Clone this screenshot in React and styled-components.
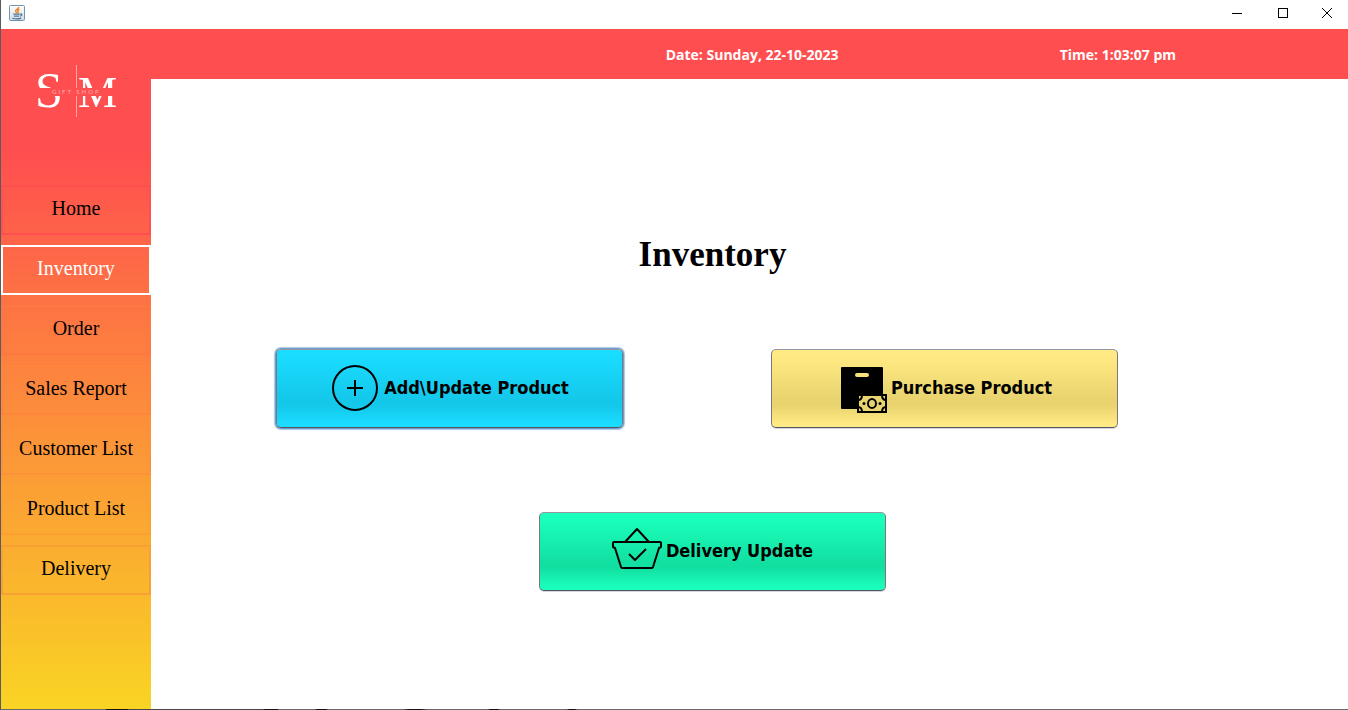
import React from "react";
import styled, { createGlobalStyle } from "styled-components";

const GlobalStyle = createGlobalStyle`
  * { box-sizing: border-box; }
  body { margin: 0; background: #fff; }
`;

const Window = styled.div`
  min-height: 100vh;
  display: flex;
  flex-direction: column;
  border-left: 1px solid #5c5a5c;
  background: #fff;
`;

const TitleBar = styled.header`
  height: 29px;
  display: flex;
  justify-content: space-between;
  padding-left: 8px;
`;

const AppIcon = styled.svg`
  width: 16px;
  height: 16px;
  margin-top: 5px;
`;

const WindowControls = styled.div`
  display: flex;
`;

const ControlButton = styled.button`
  width: 46px;
  height: 26px;
  padding: 0;
  border: 0;
  background: transparent;
  display: flex;
  align-items: center;
  justify-content: center;

  &:last-child {
    width: 42px;
  }
`;

const Body = styled.div`
  flex: 1;
  display: flex;
`;

const Sidebar = styled.aside`
  flex: 0 0 150px;
  background: linear-gradient(to bottom, #ff4e50 120px, #f9d423 100%);
`;

const Logo = styled.svg`
  display: block;
  width: 150px;
  height: 156px;
`;

const Nav = styled.nav`
  display: flex;
  flex-direction: column;
  gap: 10px;
`;

const NavButton = styled.button`
  height: 50px;
  padding: 0 0 4px;
  border: 2px solid ${(p) => p.$edge};
  background: transparent;
  color: ${(p) => (p.$active ? "#fff" : "#000")};
  font: 20px/24px "Liberation Serif", "Times New Roman", serif;
`;

const Content = styled.div`
  flex: 1;
  display: flex;
  flex-direction: column;
`;

const StatusBar = styled.div`
  height: 50px;
  padding-top: 2px;
  display: grid;
  grid-template-columns: 395fr 289fr;
  padding-left: 43%;
  align-items: center;
  background: #ff4e50;
  color: #fff;
  font: bold 14px/20px "Open Sans", "Segoe UI", sans-serif;
  white-space: nowrap;
`;

const Main = styled.main`
  flex: 1;
  display: grid;
  grid-template-columns: 124fr 843fr 230fr;
  align-content: start;
  padding-top: 152px;
`;

const Panel = styled.div`
  grid-column: 2;
  display: flex;
  flex-direction: column;
`;

const Centered = styled.div`
  display: flex;
  justify-content: center;
  padding-left: 32px;
`;

const Heading = styled.h1`
  margin: 0;
  font: bold 35px/48px "Liberation Serif", "Times New Roman", serif;
`;

const ActionRow = styled.div`
  display: flex;
  justify-content: space-between;
  gap: 24px;
  padding-left: 1px;
  margin: 70px 0 84px;
`;

const ActionButton = styled.button`
  width: 347px;
  height: 79px;
  padding: 0 0 1px;
  display: flex;
  align-items: center;
  justify-content: center;
  gap: 4px;
  border: 1px solid;
  border-color: #97979b #77777d #55555f #77777d;
  border-radius: 5px;
  background: linear-gradient(
    to bottom,
    ${(p) => p.$light} 0%,
    ${(p) => p.$light} 8%,
    ${(p) => p.$dark} 64%,
    ${(p) => p.$dark} 72%,
    ${(p) => p.$light} 96%
  );
  box-shadow: ${(p) =>
    p.$focused
      ? "0 0 0 1px #739cce, 0 0 1px 2px #a9c9e6"
      : "0 1px 0 #d5d7dc"};
  color: #000;
  font: bold 18px/24px "DejaVu Sans Condensed", Tahoma, sans-serif;
  white-space: nowrap;
`;

const ActionIcon = styled.svg`
  width: 50px;
  height: 50px;
  flex: none;
`;

const BottomEdge = styled.footer`
  height: 1px;
  background: linear-gradient(
    to right,
    #6a686a 104px, #161016 106px, #161016 126px, #49474a 128px,
    #49474a 262px, #161016 264px, #161016 276px, #6a686a 278px,
    #6a686a 314px, #161016 316px, #161016 325px, #6a686a 327px,
    #6a686a 402px, #161016 408px, #161016 420px, #6a686a 426px,
    #6a686a 487px, #161016 489px, #161016 497px, #6a686a 499px,
    #6a686a 566px, #161016 568px, #161016 574px, #6a686a 576px
  );
`;

const navItems = [
  { label: "Home", edge: "#ff4f50" },
  { label: "Inventory", edge: "#ffffff", active: true },
  { label: "Order", edge: "#ff7741" },
  { label: "Sales Report", edge: "#ff843c" },
  { label: "Customer List", edge: "#fd9038" },
  { label: "Product List", edge: "#fd9f32" },
  { label: "Delivery", edge: "#f7a033" },
];

function JavaIcon() {
  return (
    <AppIcon viewBox="0 0 16 16" aria-hidden="true">
      <defs>
        <linearGradient id="tile" x1="0" y1="0" x2="0" y2="1">
          <stop offset="0" stopColor="#fff" />
          <stop offset="1" stopColor="#cfdbe5" />
        </linearGradient>
      </defs>
      <rect x=".5" y=".5" width="15" height="15" rx="1" fill="url(#tile)" stroke="#7892a8" />
      <path d="M9.7 1.8C10.2 4 6.2 4.4 6.6 6.2c.2.8 1 1.3 1 2M10.5 4.3C9 4.9 8.2 5.7 9 6.7c.4.6.2 1.1-.3 1.5" fill="none" stroke="#ee7d1b" strokeWidth="1.4" />
      <path d="M4.2 9.2h6.5M5 11.2h5.2M3.2 13.2c2.5.8 6.5.8 9-.1M11 9.2c2.5-1 2.5 1.3.2 2" fill="none" stroke="#527694" strokeWidth="1.2" />
    </AppIcon>
  );
}

function ShopLogo() {
  return (
    <Logo viewBox="0 0 150 156" role="img" aria-label="SM Gift Shop">
      <defs>
        <mask id="band">
          <rect width="150" height="156" fill="#fff" />
          <rect y="59" width="150" height="8" fill="#000" />
        </mask>
      </defs>
      <g mask="url(#band)" fill="#fff">
        <text x="34" y="78" fontSize="50" fontFamily="Liberation Serif, serif">S</text>
        <text x="77" y="78" fontSize="44" fontFamily="Liberation Serif, serif">M</text>
        <path d="M75.5 36V88" stroke="#fff" strokeOpacity=".5" />
      </g>
      <text x="51" y="65" fontSize="6" letterSpacing="2" fill="#ffb3b3" fontFamily="Lato, sans-serif">
        GIFT SHOP
      </text>
    </Logo>
  );
}

function PlusCircleIcon() {
  return (
    <ActionIcon viewBox="0 0 50 50" fill="none" stroke="#000" strokeWidth="2" aria-hidden="true">
      <circle cx="25" cy="25" r="22" />
      <path d="M17 25h16M25 17v16" />
    </ActionIcon>
  );
}

function BagCashIcon() {
  return (
    <ActionIcon viewBox="0 0 50 50" aria-hidden="true">
      <path fillRule="evenodd" d="M5 4h40a1 1 0 0 1 1 1v26H20v15H5a1 1 0 0 1-1-1V5a1 1 0 0 1 1-1ZM20 10a2 2 0 0 0 0 4h10a2 2 0 0 0 0-4Z" />
      <rect x="21" y="32" width="28" height="17" fill="#e8d56f" stroke="#000" strokeWidth="2" />
      <path d="M21 37q4 0 4-5M45 32q0 5 4 5M21 44q4 0 4 5M45 49q0-5 4-5" fill="none" stroke="#000" strokeWidth="2" />
      <ellipse cx="35" cy="40.5" rx="4" ry="4.5" fill="none" stroke="#000" strokeWidth="2" />
      <circle cx="27" cy="40.5" r="1.5" />
      <circle cx="43" cy="40.5" r="1.5" />
    </ActionIcon>
  );
}

function BasketIcon() {
  return (
    <ActionIcon viewBox="0 0 50 50" fill="none" stroke="#000" strokeWidth="2" strokeLinejoin="round" aria-hidden="true">
      <path d="M13 16 25 3l12 13M2 16h46q1 0 1 1v4l-2 1-6 19q-.4 1-1 1H10q-.6 0-1-1L3 22l-2-1v-4q0-1 1-1Z" />
      <path d="m17 28 6 6 11-11" />
    </ActionIcon>
  );
}

export default function App() {
  return (
    <Window>
      <GlobalStyle />
      <TitleBar>
        <JavaIcon />
        <WindowControls>
          <ControlButton aria-label="Minimize">
            <svg width="10" height="10" stroke="#000"><path d="M0 5.5h10" /></svg>
          </ControlButton>
          <ControlButton aria-label="Maximize">
            <svg width="10" height="10" stroke="#000" fill="none"><rect x=".5" y=".5" width="9" height="9" /></svg>
          </ControlButton>
          <ControlButton aria-label="Close">
            <svg width="10" height="10" stroke="#000"><path d="m0 0 10 10M10 0 0 10" /></svg>
          </ControlButton>
        </WindowControls>
      </TitleBar>
      <Body>
        <Sidebar>
          <ShopLogo />
          <Nav>
            {navItems.map((item) => (
              <NavButton key={item.label} $edge={item.edge} $active={item.active}>
                {item.label}
              </NavButton>
            ))}
          </Nav>
        </Sidebar>
        <Content>
          <StatusBar>
            <span>Date: Sunday, 22-10-2023</span>
            <span>Time: 1:03:07 pm</span>
          </StatusBar>
          <Main>
            <Panel>
              <Centered>
                <Heading>Inventory</Heading>
              </Centered>
              <ActionRow>
                <ActionButton $light="#1adcff" $dark="#14c8ea" $focused>
                  <PlusCircleIcon />
                  Add\Update Product
                </ActionButton>
                <ActionButton $light="#ffea84" $dark="#e8d36e">
                  <BagCashIcon />
                  Purchase Product
                </ActionButton>
              </ActionRow>
              <Centered>
                <ActionButton $light="#1affbb" $dark="#12e0a2">
                  <BasketIcon />
                  Delivery Update
                </ActionButton>
              </Centered>
            </Panel>
          </Main>
        </Content>
      </Body>
      <BottomEdge />
    </Window>
  );
}
